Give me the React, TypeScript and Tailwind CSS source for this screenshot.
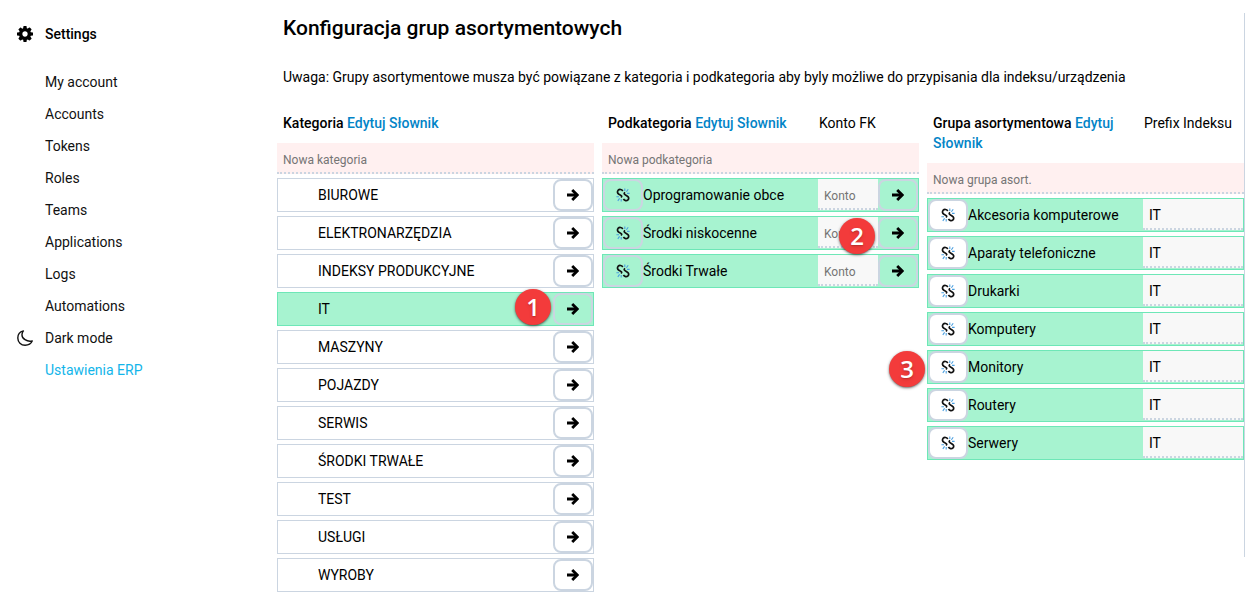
import type { ReactNode } from "react";

const menu = [
  "My account",
  "Accounts",
  "Tokens",
  "Roles",
  "Teams",
  "Applications",
  "Logs",
  "Automations",
];

const categories = [
  "BIUROWE",
  "ELEKTRONARZĘDZIA",
  "INDEKSY PRODUKCYJNE",
  "IT",
  "MASZYNY",
  "POJAZDY",
  "SERWIS",
  "ŚRODKI TRWAŁE",
  "TEST",
  "USŁUGI",
  "WYROBY",
];

const subcategories = ["Oprogramowanie obce", "Środki niskocenne", "Środki Trwałe"];

const groups = [
  "Akcesoria komputerowe",
  "Aparaty telefoniczne",
  "Drukarki",
  "Komputery",
  "Monitory",
  "Routery",
  "Serwery",
];

const GearIcon = () => (
  <svg viewBox="128 128 1536 1536" className="size-4" fill="currentColor" aria-hidden="true">
    <path d="M1152 896q0-106-75-181t-181-75-181 75-75 181 75 181 181 75 181-75 75-181zm512-109v222q0 12-8 23t-20 13l-185 28q-19 54-39 91 35 50 107 138 10 12 10 25t-9 23q-27 37-99 108t-94 71q-12 0-26-9l-138-108q-44 23-91 38-16 136-29 186-7 28-36 28h-222q-14 0-24.5-8.5t-11.5-21.5l-28-184q-49-16-90-37l-141 107q-10 9-25 9-14 0-25-11-126-114-165-168-7-10-7-23 0-12 8-23 15-21 51-66.5t54-70.5q-27-50-41-99l-183-27q-13-2-21-12.5t-8-23.5v-222q0-12 8-23t19-13l186-28q14-46 39-92-40-57-107-138-10-12-10-24 0-10 9-23 26-36 98.5-107.5t94.5-71.5q13 0 26 10l138 107q44-23 91-38 16-136 29-186 7-28 36-28h222q14 0 24.5 8.5t11.5 21.5l28 184q49 16 90 37l142-107q9-9 24-9 13 0 25 10 129 119 165 170 7 8 7 22 0 12-8 23-15 21-51 66.5t-54 70.5q26 50 41 98l183 28q13 2 21 12.5t8 23.5z" />
  </svg>
);

const MoonIcon = () => (
  <svg viewBox="0 0 16 16" className="size-4" fill="none" aria-hidden="true">
    <path
      d="M6.4 .9C2.9 1.7 .8 4.6 .8 8C.8 12.1 4 15.2 8.1 15.2C11.6 15.2 14.2 13.4 15.2 11C10 12.3 4.6 8.4 5 4.4C5.1 3 5.6 1.8 6.4 .9Z"
      stroke="currentColor"
      strokeWidth="1.4"
      strokeLinejoin="round"
    />
  </svg>
);

const ArrowIcon = () => (
  <svg viewBox="0 0 12 12" className="size-3" fill="none" stroke="currentColor" aria-hidden="true">
    <path d="M0 6H10" strokeWidth="3" />
    <path d="M5.2 1L10.2 6L5.2 11" strokeWidth="2.8" />
  </svg>
);

const UnlinkIcon = () => (
  <svg viewBox="0 0 14 14" className="size-[14px]" fill="none" aria-hidden="true">
    <path
      d="M6.8 3C5.6 1.2 3.4 1 2.2 2.2C1 3.6 1.4 5 2.6 6L5.2 7.6C6 8.2 5.8 9 4.8 9.2"
      stroke="#111"
      strokeWidth="1.7"
    />
    <path
      d="M9.2 4.6C8.2 4.8 7.8 5.8 8.6 6.4L11.4 8.2C12.8 9.2 13.2 10.6 12 11.8C10.6 13.2 8.6 12.8 7.4 11"
      stroke="#111"
      strokeWidth="1.7"
    />
    <path
      d="M8.8 .4V3M12.2 1.2L10.4 3.8M13.6 5.4H11M.4 8.8H3M1.8 12.8L3.6 10.4M5.2 13.6V11"
      stroke="#4a9fe0"
      strokeWidth="1.1"
    />
  </svg>
);

const IconButton = ({ label, white, children }: { label: string; white?: boolean; children: ReactNode }) => (
  <button
    type="button"
    aria-label={label}
    className={`flex h-8 w-10 shrink-0 items-center justify-center rounded-lg border-2 border-[#cbd5e1] ${white ? "bg-white" : ""}`}
  >
    {children}
  </button>
);

const Row = ({ active, children }: { active?: boolean; children: ReactNode }) => (
  <li
    className={`relative flex h-[34px] border ${active ? "border-[#6ee7b7] bg-[#a7f3d0]" : "border-[#cbd5e1] bg-white"}`}
  >
    {children}
  </li>
);

const Badge = ({ className, children }: { className: string; children: ReactNode }) => (
  <span
    className={`absolute z-10 flex size-9 items-center justify-center rounded-full bg-[#f33b3b] font-['Open_Sans'] text-2xl font-semibold text-white shadow-sm shadow-black/50 text-shadow-md ${className}`}
  >
    {children}
  </span>
);

const Column = ({
  title,
  extra,
  placeholder,
  children,
}: {
  title: string;
  extra?: string;
  placeholder: string;
  children: ReactNode;
}) => (
  <section className="min-w-0 flex-1">
    <div className="flex pb-[10px] pl-[6px]">
      <h2 className="flex-1 font-medium">
        {title}{" "}
        <a href="#" className="text-[#0284c7]">
          Edytuj Słownik
        </a>
      </h2>
      {extra && <span className="w-[100px]">{extra}</span>}
    </div>
    <input
      type="text"
      aria-label={placeholder}
      placeholder={placeholder}
      className="block h-[31px] w-full border-b-2 border-dotted border-[#cbd5e1] bg-[#fff0f0] px-[6px] pt-1 text-xs placeholder:text-[#757575]"
    />
    <ul className="mt-1 flex flex-col gap-1">{children}</ul>
  </section>
);

const App = () => {
  return (
    <div className="flex bg-white font-[Roboto,sans-serif] text-sm leading-5 text-black">
      <nav className="w-[277px] shrink-0 pt-[18px] pl-[17px]">
        <div className="mb-4 flex h-8 items-center gap-3 font-medium">
          <GearIcon />
          Settings
        </div>
        <ul className="text-[#111]">
          {menu.map((item) => (
            <li key={item} className="flex h-8 items-center pl-7">
              <a href="#">{item}</a>
            </li>
          ))}
          <li>
            <button type="button" className="flex h-8 items-center gap-3">
              <MoonIcon />
              Dark mode
            </button>
          </li>
          <li className="flex h-8 items-center pl-7">
            <a href="#" className="text-[#13b5ea]">
              Ustawienia ERP
            </a>
          </li>
        </ul>
      </nav>

      <main className="min-w-0 flex-1 pt-[14px]">
        <h1 className="pl-[6px] text-[21px] leading-7 font-medium">Konfiguracja grup asortymentowych</h1>
        <p className="mt-[25px] mb-[26px] pl-[6px]">
          Uwaga: Grupy asortymentowe musza być powiązane z kategoria i podkategoria aby byly możliwe do
          przypisania dla indeksu/urządzenia
        </p>

        <div className="flex gap-2">
          <Column title="Kategoria" placeholder="Nowa kategoria">
            {categories.map((name) => (
              <Row key={name} active={name === "IT"}>
                <span className="flex flex-1 items-center pl-10">{name}</span>
                {name === "IT" && <Badge className="-top-1 right-[42px]">1</Badge>}
                <IconButton label={name}>
                  <ArrowIcon />
                </IconButton>
              </Row>
            ))}
          </Column>

          <Column title="Podkategoria" extra="Konto FK" placeholder="Nowa podkategoria">
            {subcategories.map((name, i) => (
              <Row key={name} active>
                <IconButton label="Odłącz">
                  <UnlinkIcon />
                </IconButton>
                <span className="flex flex-1 items-center">{name}</span>
                <input
                  type="text"
                  aria-label={`Konto ${name}`}
                  placeholder="Konto"
                  className="h-[31px] w-[60px] border-b-2 border-dotted border-[#cbd5e1] bg-[#f8f8f8] px-[6px] pt-1 text-xs placeholder:text-[#757575]"
                />
                {i === 1 && <Badge className="top-px right-[43px]">2</Badge>}
                <IconButton label={name}>
                  <ArrowIcon />
                </IconButton>
              </Row>
            ))}
          </Column>

          <Column title="Grupa asortymentowa" extra="Prefix Indeksu" placeholder="Nowa grupa asort.">
            {groups.map((name) => (
              <Row key={name} active>
                {name === "Monitory" && <Badge className="top-0 -left-[39px]">3</Badge>}
                <IconButton label="Odłącz" white>
                  <UnlinkIcon />
                </IconButton>
                <span className="flex flex-1 items-center">{name}</span>
                <input
                  type="text"
                  aria-label={`Prefix ${name}`}
                  defaultValue="IT"
                  className="h-[31px] w-[100px] border-b-2 border-dotted border-[#cbd5e1] bg-[#f8f8f8] px-[6px] pt-[2px]"
                />
              </Row>
            ))}
          </Column>
        </div>
      </main>

      <div className="mt-[13px] h-[544px] w-px shrink-0 bg-[#cbd5e1]" />
    </div>
  );
};

export default App;
